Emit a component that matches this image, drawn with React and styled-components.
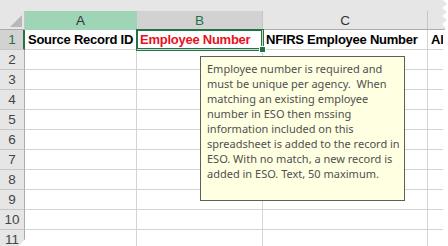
import React from 'react';
import styled, { createGlobalStyle } from 'styled-components';

const GlobalStyle = createGlobalStyle`
  html, body {
    margin: 0;
    padding: 0;
    background: #fff;
  }
  body {
    width: 448px;
    height: 246px;
    overflow: hidden;
  }
`;

const Window = styled.div`
  position: relative;
  width: 448px;
  height: 246px;
  overflow: hidden;
  background: #fff;
  font-family: 'Liberation Sans', Arial, sans-serif;
`;

const TopStrip = styled.div`
  height: 11px;
  background: #e6e6e6;
`;

const Sheet = styled.div`
  display: grid;
  grid-template-columns: 25px 112px 126px 165px 1fr;
  grid-template-rows: 19px;
  grid-auto-rows: 20px;
`;

const Corner = styled.div`
  box-sizing: border-box;
  background: #e6e6e6;
  border-right: 1px solid #c6c6c6;
  border-bottom: 1px solid #ababab;
  display: flex;
  align-items: flex-end;
  justify-content: flex-end;
  padding: 0 2px 2px 0;
`;

const headerBg = {
  picked: '#9fd5b7',
  active: '#d2d2d2',
  normal: '#e6e6e6',
};

const ColHeader = styled.div`
  box-sizing: border-box;
  display: flex;
  align-items: center;
  justify-content: center;
  background: ${(p) => headerBg[p.$state || 'normal']};
  border-right: 1px solid ${(p) => (p.$state === 'picked' ? '#9fd5b7' : '#c6c6c6')};
  border-bottom: 1px solid ${(p) => (p.$state === 'picked' ? '#9fd5b7' : '#ababab')};
  color: ${(p) => (p.$state === 'active' ? '#217346' : '#333')};
  font-size: 13.5px;
  padding-top: 1px;
`;

const RowHeader = styled.div`
  box-sizing: border-box;
  display: flex;
  align-items: center;
  justify-content: center;
  background: ${(p) => (p.$active ? '#d2d2d2' : '#e6e6e6')};
  border-right: ${(p) => (p.$active ? '2px solid #217346' : '1px solid #ababab')};
  border-bottom: 1px solid #c6c6c6;
  color: ${(p) => (p.$active ? '#217346' : '#444')};
  font-size: 13.5px;
  padding-left: ${(p) => (p.$active ? '1px' : '0')};
`;

const Cell = styled.div`
  position: relative;
  box-sizing: border-box;
  display: flex;
  align-items: flex-end;
  padding: 0 3px 2px;
  border-right: 1px solid #d4d4d4;
  border-bottom: 1px solid #d4d4d4;
  font-size: 13px;
  font-weight: 700;
  letter-spacing: -0.25px;
  color: ${(p) => p.$color || '#000'};
  white-space: nowrap;
  overflow: ${(p) => (p.$selected ? 'visible' : 'hidden')};

  ${(p) =>
    p.$selected &&
    `
    z-index: 2;
    box-shadow: 0 0 0 1px #217346, inset 0 0 0 1px #217346;
    &::after {
      content: '';
      position: absolute;
      right: -4px;
      bottom: -4px;
      width: 5px;
      height: 5px;
      background: #217346;
      border: 1px solid #fff;
    }
  `}
`;

const Comment = styled.div`
  position: absolute;
  left: 200px;
  top: 56px;
  width: 205px;
  height: 145px;
  box-sizing: border-box;
  padding: 4px 6px;
  background: #ffffe1;
  border: 1px solid #5f5f55;
  color: #505050;
  font-family: 'Noto Sans', 'Open Sans', sans-serif;
  font-size: 11px;
  line-height: 15px;
  z-index: 5;
`;

const CommentLine = styled.div`
  white-space: pre;
`;

const TornEdges = styled.svg`
  position: absolute;
  inset: 0;
  pointer-events: none;
  z-index: 10;
`;

const columns = [
  { id: 'A', state: 'picked' },
  { id: 'B', state: 'active' },
  { id: 'C', state: 'normal' },
  { id: '', state: 'normal' },
];

const firstRow = [
  { text: 'Source Record ID' },
  { text: 'Employee Number', color: '#e81123', selected: true },
  { text: 'NFIRS Employee Number' },
  { text: 'Alias Name' },
];

const commentLines = [
  'Employee number is required and',
  'must be unique per agency.  When',
  'matching an existing employee',
  'number in ESO then mssing',
  'information included on this',
  'spreadsheet is added to the record in',
  'ESO. With no match, a new record is',
  'added in ESO. Text, 50 maximum.',
];

const emptyRows = [2, 3, 4, 5, 6, 7, 8, 9, 10, 11];

export default function App() {
  return (
    <Window>
      <GlobalStyle />
      <TopStrip />
      <Sheet>
        <Corner>
          <svg width="12" height="12" viewBox="0 0 12 12">
            <polygon points="12,0 12,12 0,12" fill="#b8b8b8" />
          </svg>
        </Corner>
        {columns.map((c, i) => (
          <ColHeader key={i} $state={c.state}>
            {c.id}
          </ColHeader>
        ))}

        <RowHeader $active>1</RowHeader>
        {firstRow.map((c, i) => (
          <Cell key={i} $color={c.color} $selected={c.selected}>
            {c.text}
          </Cell>
        ))}

        {emptyRows.map((n) => (
          <React.Fragment key={n}>
            <RowHeader>{n}</RowHeader>
            <Cell />
            <Cell />
            <Cell />
            <Cell />
          </React.Fragment>
        ))}
      </Sheet>

      <Comment>
        {commentLines.map((line, i) => (
          <CommentLine key={i}>{line}</CommentLine>
        ))}
      </Comment>

      <TornEdges width="448" height="246" viewBox="0 0 448 246">
        <polygon
          points="448,0 443,0 447,4 442,8 447,12 442,16 447,20 442,24 446,28 443,32 443,246 448,246"
          fill="#fff"
        />
        <polygon points="19,246 26,238 26,246" fill="#fff" />
      </TornEdges>
    </Window>
  );
}
